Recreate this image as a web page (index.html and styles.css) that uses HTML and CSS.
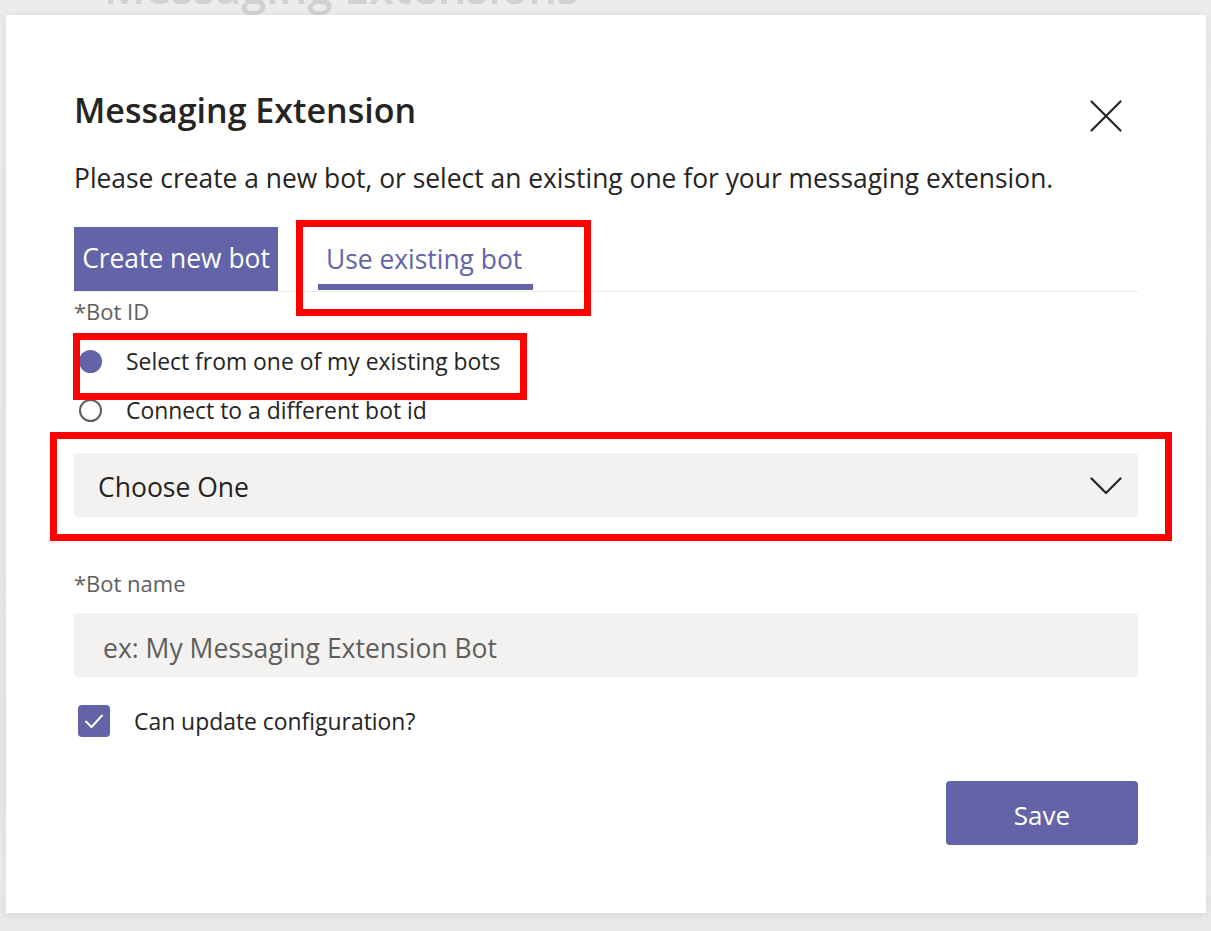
FILE: index.html
```html
<!DOCTYPE html>
<html lang="en">
<head>
<meta charset="utf-8">
<title>Messaging Extension</title>
<link rel="stylesheet" href="styles.css">
</head>
<body>
<div class="page">
  <h1 class="page-title">Messaging Extensions</h1>
</div>

<div class="dialog" role="dialog" aria-labelledby="dlg-title">
  <header class="dlg-head">
    <h2 id="dlg-title" class="dlg-title">Messaging Extension</h2>
    <button class="close" aria-label="Close">
      <svg width="32" height="32" viewBox="0 0 32 32" aria-hidden="true">
        <path d="M1.5 1.5 L30.5 30.5 M30.5 1.5 L1.5 30.5" stroke="#252423" stroke-width="2.2" stroke-linecap="round" fill="none"/>
      </svg>
    </button>
  </header>

  <p class="desc">Please create a new bot, or select an existing one for your messaging extension.</p>

  <div class="tabs">
    <button class="tab tab-filled">Create new bot</button>
    <button class="tab tab-selected">Use existing bot</button>
  </div>

  <div class="field-label">*Bot ID</div>

  <div class="radios">
    <label class="radio-row">
      <span class="radio radio-on"></span>
      <span class="radio-text">Select from one of my existing bots</span>
    </label>
    <label class="radio-row">
      <span class="radio radio-off"></span>
      <span class="radio-text">Connect to a different bot id</span>
    </label>
  </div>

  <div class="select">
    <span class="select-text">Choose One</span>
    <svg class="chevron" width="32" height="18" viewBox="0 0 32 18" aria-hidden="true">
      <path d="M1.5 1.5 L16 16 L30.5 1.5" stroke="#252423" stroke-width="2.2" fill="none" stroke-linecap="round" stroke-linejoin="round"/>
    </svg>
  </div>

  <div class="field-label label-name">*Bot name</div>
  <div class="input"><span class="placeholder">ex: My Messaging Extension Bot</span></div>

  <label class="check-row">
    <span class="checkbox">
      <svg width="32" height="32" viewBox="0 0 32 32" aria-hidden="true">
        <path d="M8 16.5 L13.5 22 L24 10.5" stroke="#ffffff" stroke-width="2" fill="none" stroke-linecap="round" stroke-linejoin="round"/>
      </svg>
    </span>
    <span class="check-text">Can update configuration?</span>
  </label>

  <div class="actions">
    <button class="save">Save</button>
  </div>

  <div class="mark mark-tab"></div>
  <div class="mark mark-radio"></div>
  <div class="mark mark-select"></div>
</div>
</body>
</html>
```

FILE: styles.css
```css
* { box-sizing: border-box; }

html, body {
  margin: 0;
  padding: 0;
}

body {
  width: 1211px;
  height: 931px;
  overflow: hidden;
  background: #e9e9e9;
  font-family: "Open Sans", "Noto Sans", sans-serif;
  color: #252423;
  position: relative;
}

.page {
  height: 931px;
  background: linear-gradient(#ececec, #e7e7e7 90%, #eeeeee);
}

.page-title {
  margin: -35px 0 0 104px;
  font-size: 45px;
  line-height: 44px;
  font-weight: 600;
  color: #d1d1d1;
}

.dialog {
  position: absolute;
  left: 6px;
  top: 15px;
  width: 1200px;
  height: 898px;
  background: #ffffff;
  padding: 75px 68px 0 68px;
  box-shadow: 0 2px 10px rgba(0,0,0,0.08);
}

.dlg-head {
  display: flex;
  justify-content: space-between;
  align-items: flex-start;
  height: 40px;
}

.dlg-title {
  margin: 0;
  font-size: 34px;
  line-height: 40px;
  font-weight: 600;
  color: #252423;
}

.close {
  border: 0;
  background: none;
  padding: 0;
  margin: 10px 16px 0 0;
  width: 32px;
  height: 32px;
  display: flex;
}

.desc {
  margin: 32px 0 0 0;
  font-size: 26.4px;
  line-height: 32px;
  color: #252423;
  white-space: nowrap;
}

.tabs {
  margin-top: 33px;
  display: flex;
  gap: 40px;
  border-bottom: 1px solid #ebebeb;
  height: 65px;
}

.tab {
  font-family: inherit;
  border: 0;
  background: none;
  padding: 0 8px;
  height: 64px;
  font-size: 26.4px;
  line-height: 60px;
  cursor: pointer;
  white-space: nowrap;
}

.tab-filled {
  background: #6264a7;
  color: #ffffff;
  width: 204px;
  padding: 0 0 2px 0;
  text-align: center;
}

.tab-selected {
  color: #6264a7;
  width: 215px;
  padding: 0 0 0 8px;
  text-align: left;
  position: relative;
  line-height: 58px;
}

.tab-selected::after {
  content: "";
  position: absolute;
  left: 0;
  right: 0;
  bottom: 1px;
  height: 6px;
  background: #6264a7;
}

.field-label {
  margin: 7px 0 0 0;
  font-size: 22px;
  line-height: 24px;
  color: #605e5c;
}

.radios {
  margin-top: 14px;
  display: flex;
  flex-direction: column;
}

.radio-row {
  display: flex;
  align-items: center;
  height: 49px;
}

.radio {
  width: 23px;
  height: 23px;
  border-radius: 50%;
  margin-left: 5px;
  flex: none;
}

.radio-on {
  background: #6264a7;
}

.radio-off {
  border: 2px solid #605e5c;
}

.radio-text {
  margin-left: 24px;
  font-size: 22.9px;
  color: #252423;
  white-space: nowrap;
}

.select {
  margin-top: 18px;
  height: 64px;
  background: #f3f2f1;
  border-radius: 4px;
  display: flex;
  align-items: center;
  justify-content: space-between;
  padding: 0 16px 0 24px;
}

.select-text {
  font-size: 26.5px;
  color: #252423;
  padding-top: 4px;
}

.chevron {
  margin-top: 2px;
}

.label-name {
  margin-top: 54px;
}

.input {
  margin-top: 18px;
  height: 64px;
  background: #f3f2f1;
  border-radius: 4px;
  display: flex;
  align-items: center;
  padding-left: 29px;
}

.placeholder {
  font-size: 26.5px;
  color: #605e5c;
  padding-top: 5px;
}

.check-row {
  margin-top: 28px;
  display: flex;
  align-items: center;
  height: 32px;
}

.checkbox {
  width: 32px;
  height: 32px;
  border-radius: 4px;
  background: #6264a7;
  margin-left: 4px;
  display: flex;
  flex: none;
}

.check-text {
  margin-left: 24px;
  font-size: 22.9px;
  color: #252423;
}

.actions {
  margin-top: 44px;
  display: flex;
  justify-content: flex-end;
}

.save {
  font-family: inherit;
  width: 192px;
  height: 64px;
  border: 0;
  border-radius: 4px;
  background: #6264a7;
  color: #ffffff;
  font-size: 26px;
  padding: 4px 0 0 0;
}

.mark {
  position: absolute;
  border: 7px solid #ff0000;
  pointer-events: none;
}

.mark-tab {
  left: 290px;
  top: 205px;
  width: 295px;
  height: 96px;
}

.mark-radio {
  left: 67px;
  top: 318px;
  width: 454px;
  height: 67px;
}

.mark-select {
  left: 44px;
  top: 417px;
  width: 1122px;
  height: 109px;
}
```
